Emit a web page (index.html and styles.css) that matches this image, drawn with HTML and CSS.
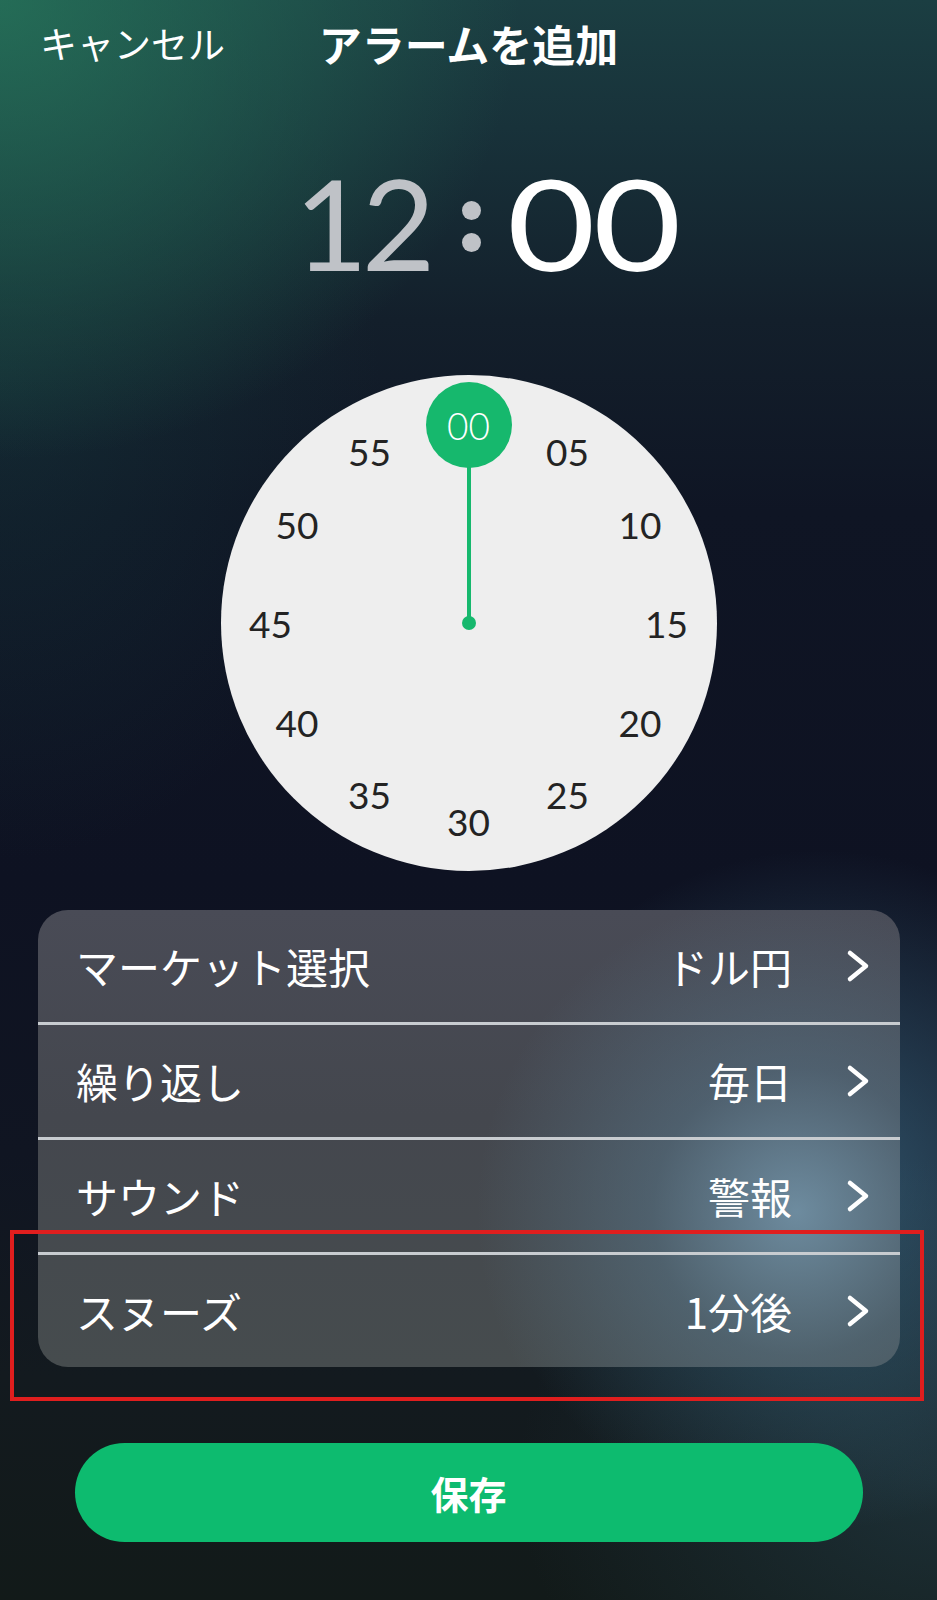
FILE: index.html
```html
<!DOCTYPE html>
<html lang="ja">
<head>
<meta charset="utf-8">
<title>アラームを追加</title>
<link rel="stylesheet" href="styles.css">
</head>
<body>
<div class="screen">
  <header class="header">
    <span class="cancel">キャンセル</span>
    <h1 class="title">アラームを追加</h1>
    <span></span>
  </header>

  <div class="time">
    <div class="time-side left"><span class="hour">12</span></div>
    <div class="colon"><i></i><i></i></div>
    <div class="time-side right"><span class="minute">00</span></div>
  </div>

  <div class="clock">
    <div class="hand"></div>
    <div class="pivot"></div>
    <span class="num selected" style="--a:0deg">00</span>
    <span class="num" style="--a:30deg">05</span>
    <span class="num" style="--a:60deg">10</span>
    <span class="num" style="--a:90deg">15</span>
    <span class="num" style="--a:120deg">20</span>
    <span class="num" style="--a:150deg">25</span>
    <span class="num" style="--a:180deg">30</span>
    <span class="num" style="--a:210deg">35</span>
    <span class="num" style="--a:240deg">40</span>
    <span class="num" style="--a:270deg">45</span>
    <span class="num" style="--a:300deg">50</span>
    <span class="num" style="--a:330deg">55</span>
  </div>

  <div class="card">
    <div class="row">
      <span class="label">マーケット選択</span>
      <span class="value">ドル円</span>
      <svg class="chev" viewBox="0 0 24 34" width="24" height="34"><path d="M4 4 L20 17 L4 30"/></svg>
    </div>
    <div class="row">
      <span class="label">繰り返し</span>
      <span class="value">毎日</span>
      <svg class="chev" viewBox="0 0 24 34" width="24" height="34"><path d="M4 4 L20 17 L4 30"/></svg>
    </div>
    <div class="row">
      <span class="label">サウンド</span>
      <span class="value">警報</span>
      <svg class="chev" viewBox="0 0 24 34" width="24" height="34"><path d="M4 4 L20 17 L4 30"/></svg>
    </div>
    <div class="row">
      <span class="label">スヌーズ</span>
      <span class="value">1分後</span>
      <svg class="chev" viewBox="0 0 24 34" width="24" height="34"><path d="M4 4 L20 17 L4 30"/></svg>
    </div>
  </div>

  <button class="save">保存</button>

  <div class="highlight"></div>
</div>
</body>
</html>
```

FILE: styles.css
```css
* { box-sizing: border-box; }

html, body {
  margin: 0;
  padding: 0;
  background: #0e1322;
}

.screen {
  position: relative;
  width: 937px;
  height: 1600px;
  overflow: hidden;
  font-family: "Noto Sans CJK JP", "Noto Sans", sans-serif;
  color: #fff;
  background:
    radial-gradient(ellipse 520px 460px at 0 0, rgba(38, 116, 90, 0.85), rgba(38, 116, 90, 0) 100%),
    radial-gradient(ellipse 380px 480px at 0 380px, rgba(24, 66, 68, 0.38), rgba(24, 66, 68, 0) 100%),
    radial-gradient(circle 340px at 820px 1190px, rgba(70, 125, 155, 0.6), rgba(70, 125, 155, 0) 100%),
    radial-gradient(ellipse 420px 320px at 937px 1480px, rgba(36, 62, 72, 0.6), rgba(36, 62, 72, 0) 100%),
    linear-gradient(180deg, #1b3e42 0%, #18323a 8%, #131f2b 20%, #0f1524 32%, #0e1222 55%, #101522 72%, #131a1f 86%, #121a19 100%);
}

/* header */
.header {
  display: grid;
  grid-template-columns: 1fr auto 1fr;
  align-items: center;
  height: 86px;
  padding: 0 40px;
}

.cancel {
  justify-self: start;
  font-size: 37px;
  line-height: 1;
  font-weight: 400;
}

.title {
  margin: 0;
  font-size: 43px;
  line-height: 1;
  font-weight: 700;
}

/* time */
.time {
  display: flex;
  justify-content: center;
  align-items: flex-start;
  height: 127px;
  margin-top: 73px;
  font-family: Lato, "Open Sans", sans-serif;
  font-size: 127px;
  line-height: 1;
}

.time-side {
  width: 200px;
  display: flex;
}

.time-side.left { justify-content: flex-end; }
.time-side.right { justify-content: flex-start; }

.hour {
  display: inline-block;
  color: #bfc2c7;
  letter-spacing: -6px;
  padding-right: 1px;
}

.minute {
  display: inline-block;
  color: #ffffff;
  letter-spacing: -2px;
  transform: scaleX(1.2);
  transform-origin: left center;
}

.colon {
  width: 22px;
  height: 51px;
  margin: 42px 24px 0 30px;
  display: flex;
  flex-direction: column;
  justify-content: space-between;
  align-items: center;
}

.colon i {
  display: block;
  width: 19px;
  height: 19px;
  border-radius: 50%;
  background: #bfc2c7;
}

/* clock */
.clock {
  position: relative;
  width: 496px;
  height: 496px;
  margin: 89px auto 0;
  border-radius: 50%;
  background: #eeeeee;
}

.hand {
  position: absolute;
  left: 246px;
  top: 88px;
  width: 4px;
  height: 160px;
  background: #16b86d;
}

.pivot {
  position: absolute;
  left: 241px;
  top: 241px;
  width: 14px;
  height: 14px;
  border-radius: 50%;
  background: #16b86d;
}

.num {
  position: absolute;
  left: 50%;
  top: 50%;
  font-family: Lato, "Open Sans", sans-serif;
  font-size: 37px;
  line-height: 1;
  color: #232323;
  transform: translate(-50%, -50%) rotate(var(--a)) translateY(-198px) rotate(calc(-1 * var(--a)));
}

.num.selected {
  width: 86px;
  height: 86px;
  border-radius: 50%;
  background: #16b86d;
  color: #ffffff;
  display: flex;
  align-items: center;
  justify-content: center;
  font-weight: 300;
}

/* settings card */
.card {
  margin: 39px 37px 0 38px;
  border-radius: 30px;
  overflow: hidden;
  background:
    radial-gradient(circle 320px at 88% 66%, rgba(125, 165, 190, 0.72), rgba(95, 135, 160, 0.38) 45%, rgba(80, 110, 130, 0) 100%),
    linear-gradient(180deg, #494b56 0%, #44474e 45%, #464c4e 100%);
}

.row {
  display: flex;
  align-items: center;
  height: 112px;
  padding: 0 30px 0 38px;
}

.row + .row {
  height: 115px;
  border-top: 3px solid #c8ccd0;
}

.label {
  flex: 1;
  font-size: 42px;
  line-height: 1;
}

.value {
  font-size: 42px;
  line-height: 1;
  margin-right: 54px;
}

.chev {
  display: block;
  flex: none;
}

.chev path {
  fill: none;
  stroke: #ffffff;
  stroke-width: 4.5;
  stroke-linecap: round;
  stroke-linejoin: round;
}

/* save button */
.save {
  display: block;
  width: 788px;
  height: 99px;
  margin: 76px auto 0;
  border: none;
  border-radius: 50px;
  background: #0dbb6f;
  color: #ffffff;
  font-family: "Noto Sans CJK JP", "Noto Sans", sans-serif;
  font-size: 38px;
  font-weight: 700;
  line-height: 1;
}

/* annotation box */
.highlight {
  position: absolute;
  left: 10px;
  top: 1230px;
  width: 914px;
  height: 171px;
  border: 4px solid #e01e1e;
  pointer-events: none;
}
```
